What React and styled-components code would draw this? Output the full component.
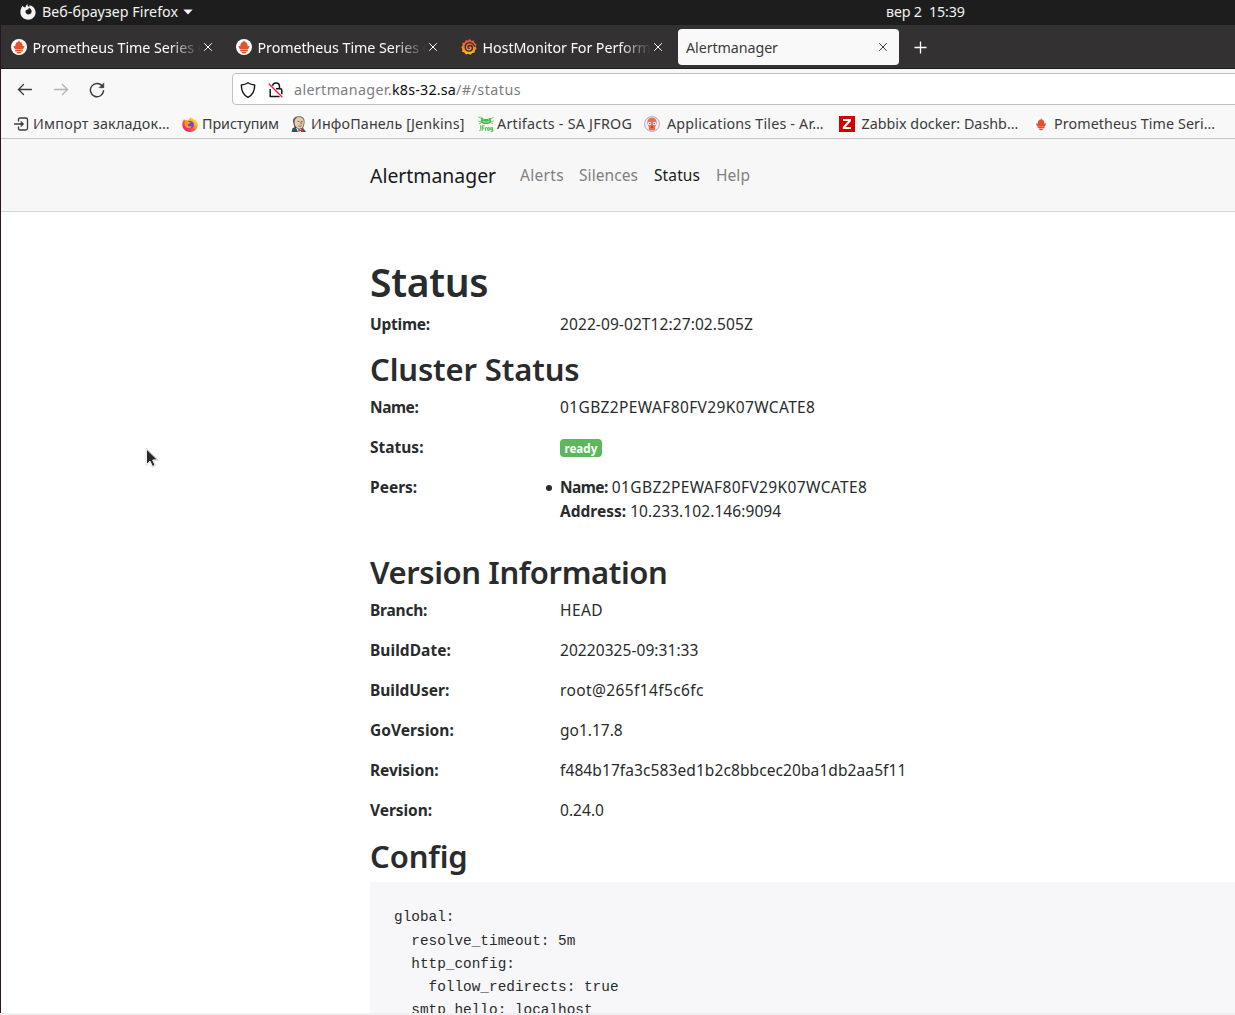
import React from 'react';
import styled, { createGlobalStyle, css } from 'styled-components';

const GlobalStyle = createGlobalStyle`
  * { box-sizing: border-box; }
  html, body { margin: 0; height: 100%; overflow: hidden; }
  #root { height: 100%; }
  body {
    font-family: "Noto Sans", "Open Sans", sans-serif;
    color: #292b2c;
    background: #fff;
  }
`;

const Desktop = styled.div`
  position: relative;
  display: flex;
  flex-direction: column;
  height: 1015px;
  width: 1235px;
  overflow: hidden;
  background: #f0f0f0;
  cursor: default;
`;

/* Letter spacing in thousandths of an em. */
const tracked = css`
  letter-spacing: ${(p) => (p.$track || 0) / 1000}em;
`;

/* ---------- desktop top bar ---------- */

const TopBar = styled.header`
  display: grid;
  grid-template-columns: 886px 1fr;
  align-items: center;
  height: 25px;
  flex: none;
  padding-bottom: 2px;
  background: #1d1d1d;
  color: #f2f2f2;
  font-size: 14.3px;
  line-height: 23px;
  white-space: pre;
`;

const AppMenu = styled.div`
  display: flex;
  align-items: center;
  padding-left: 20px;
  svg { flex: none; }
`;

const AppMenuLabel = styled.span`
  margin: 0 5px 0 6px;
  ${tracked}
`;

const Clock = styled.time`
  ${tracked}
`;

/* ---------- browser window ---------- */

const Window = styled.main`
  display: flex;
  flex-direction: column;
  height: 988px;
  flex: none;
  border-left: 1px solid #2e1226;
  background: #fff;
  overflow: hidden;
`;

const TabStrip = styled.div`
  display: flex;
  align-items: center;
  height: 44px;
  flex: none;
  padding-top: 1px;
  background: #333132;
  border-bottom: 1px solid #1f1d1e;
`;

const Tab = styled.div`
  display: flex;
  align-items: center;
  width: ${(p) => (p.$active ? 221 : 225)}px;
  height: 36px;
  margin-left: ${(p) => (p.$active ? 2 : 0)}px;
  padding: 0 ${(p) => (p.$active ? 11 : 13)}px 0 ${(p) => (p.$active ? 8 : 10)}px;
  border-radius: 4px;
  color: ${(p) => (p.$active ? '#3b3b3b' : '#fbfbfb')};
  background: ${(p) => (p.$active ? '#f9f9f9' : 'transparent')};
  svg { flex: none; }
`;

const TabTitle = styled.span`
  flex: 1;
  min-width: 0;
  height: 36px;
  margin-left: ${(p) => (p.$bare ? 0 : 5.5)}px;
  margin-right: 2px;
  overflow: hidden;
  white-space: nowrap;
  font-size: 14.3px;
  line-height: 37px;
  ${tracked}
  ${(p) => !p.$bare && css`mask-image: linear-gradient(to left, transparent 0, #000 32px);`}
`;

const NewTab = styled.div`
  display: flex;
  margin-left: 15px;
`;

const Toolbar = styled.div`
  display: flex;
  align-items: flex-start;
  height: 41px;
  flex: none;
  padding-top: 4px;
  background: #f8f8f8;
`;

const NavButtons = styled.div`
  display: flex;
  align-items: center;
  gap: 20px;
  width: 231px;
  height: 34px;
  padding-left: 16px;
`;

const UrlField = styled.div`
  display: flex;
  align-items: center;
  flex: 1;
  height: 32px;
  margin-right: -10px;
  padding: 1px 0 0 7px;
  border: 1px solid #c0c0c0;
  border-radius: 4px;
  background: #fff;
`;

const UrlIcons = styled.div`
  display: flex;
  gap: 12px;
  width: 54px;
`;

const UrlPart = styled.span`
  color: ${(p) => (p.$host ? '#0b0b0b' : '#7d7d7d')};
  font-size: 14.3px;
  line-height: 30px;
  ${tracked}
`;

const Bookmarks = styled.div`
  display: flex;
  height: 29px;
  flex: none;
  padding: 0 0 0 12px;
  background: #f8f8f8;
  border-bottom: 1px solid #c4c4c4;
`;

const Bookmark = styled.div`
  display: flex;
  align-items: center;
  flex: none;
  width: ${(p) => p.$w}px;
  gap: ${(p) => p.$gap || 4}px;
  color: #3b3b3b;
  font-size: 14.3px;
  line-height: 28px;
  white-space: nowrap;
  svg { flex: none; }
`;

const BookmarkLabel = styled.span`
  ${tracked}
`;

/* ---------- page ---------- */

const SiteNav = styled.nav`
  display: flex;
  align-items: center;
  height: 73px;
  flex: none;
  padding-left: 369px;
  background: #f7f7f7;
  border-bottom: 1px solid #d5d5d5;
`;

const Brand = styled.a`
  width: 150px;
  padding-top: 2px;
  color: #1a1a1a;
  font-size: 19.4px;
  line-height: 30px;
`;

const NavItem = styled.a`
  width: ${(p) => p.$w}px;
  color: ${(p) => (p.$active ? '#1a1a1a' : '#808080')};
  font-size: 15.5px;
  line-height: 24px;
  ${tracked}
`;

const Content = styled.section`
  flex: 1;
  min-height: 0;
  padding: 48px 0 0 369px;
  overflow: hidden;
`;

const Title = styled.h1`
  margin: 0 0 8px;
  font-size: 39px;
  font-weight: 600;
  line-height: 44px;
  ${tracked}
`;

const Heading = styled.h2`
  margin: 0 0 7.8px;
  padding-top: 0.2px;
  font-size: 31px;
  font-weight: 600;
  line-height: 35.2px;
  ${tracked}
`;

const Row = styled.div`
  display: grid;
  grid-template-columns: 190px 1fr;
  margin-bottom: ${(p) => (p.$last ? 32 : 16)}px;
  font-size: 15.5px;
  line-height: 24px;
`;

const Label = styled.b`
  font-weight: 700;
  ${tracked}
`;

const Value = styled.span`
  ${tracked}
`;

const Badge = styled.span`
  display: inline-block;
  height: 18px;
  margin-top: 4px;
  padding: 0 4.5px;
  border-radius: 4px;
  background: #5cb85c;
  color: #fff;
  font-size: 11.6px;
  font-weight: 700;
  line-height: 19px;
  vertical-align: top;
`;

const Peers = styled.ul`
  margin: 0;
  padding: 0;
  list-style: none;
`;

const Peer = styled.li`
  position: relative;
  &::before {
    content: "";
    position: absolute;
    left: -14px;
    top: 10px;
    width: 6px;
    height: 6px;
    border-radius: 50%;
    background: #292b2c;
  }
`;

const Config = styled.pre`
  margin: 0;
  padding: 24.85px 24px 0;
  height: 300px;
  background: #f7f7f9;
  color: #292b2c;
  font: 14.4px/23.1px "Liberation Mono", monospace;
`;

const Pointer = styled.svg`
  position: absolute;
  left: 145px;
  top: 447px;
`;

/* ---------- icons ---------- */

const FirefoxMono = () => (
  <svg width="16" height="16" viewBox="0 0 16 16">
    <path fill="#f2f2f2" fillRule="evenodd" d="M2.4 1.7 4 3.2l1.5.1.7-2.1 1.6-1-.1 1.9 2 1.1L8.300 4.800l.2.700c-1.500 0-2.700.500-3 1.500-.2 2.200 1.200 3.500 3.100 3.500 2.200 0 3.400-1.800 2.900-3.900-.3-1.200-1.200-2.300-2.300-2.700L9.500 1.200C13 1.900 15.600 4.700 15.600 8.500c0 4-3.200 7.200-7.500 7.200S.4 12.500.4 8.300C.4 5.300 1.300 4 2.400 1.700Z" />
  </svg>
);

const Caret = () => (
  <svg width="10" height="6" viewBox="0 0 10 6"><path d="M.3.500h9.400L5 5.500Z" fill="#f2f2f2" /></svg>
);

const Prometheus = ({ inset }) => (
  <svg width="16" height="16" viewBox="0 0 16 16">
    <circle cx="8" cy="8" r="8" fill="#fff" />
    <g fill="#e6522c" transform={inset ? 'translate(.9 1.200) scale(.9)' : undefined}>
      <path d="M8 1c.2 1 1 1.700 1.300 2.600.3-.3.400-.8.400-1.200 1.300 1.600 2.200 3.100 2 4.900l1.800-.6c-.1 1.500-.8 2.900-1.800 3.800H4.300c-1-.9-1.700-2.300-1.800-3.800l1.800.6c-.2-1.800.7-3.300 2-4.900 0 .4.100.9.400 1.200C7 2.700 7.800 2 8 1Z" />
      <path d="M4.200 11h7.600v1.400H4.200zM5.500 12.900h5c-.4 1.100-1.300 1.700-2.500 1.700s-2.100-.6-2.500-1.700Z" />
    </g>
  </svg>
);

const Grafana = () => (
  <svg width="16" height="16" viewBox="0 0 16 16">
    <defs>
      <linearGradient id="grafana" x1="0" y1="1" x2="0" y2="0">
        <stop offset="0" stopColor="#fcc81b" /><stop offset=".55" stopColor="#f4792b" /><stop offset="1" stopColor="#ee4f29" />
      </linearGradient>
    </defs>
    <path fill="url(#grafana)" d="m8.600.1 1.700 1.700 2.700-.4.200 2.300 2.200 1.500-.8 2.200 1.100 2.100-1.800 1.700-.2 2.400-2.500.3-1.700 1.900-2.200-1-2.400.7-1.400-2-2.400-.8.300-2.400L.2 8.500l1.400-1.900-.2-2.500 2.300-.7.900-2.200 2.400.4Z" />
    <path fill="none" stroke="#333132" strokeWidth="1.400" strokeLinecap="round" d="M13.600 7.300C12.500 4.600 10.700 3.700 8.700 3.600 5.700 3.400 4 5.800 4.200 8.200c.2 2.500 2 3.900 4.100 3.900 1.800 0 3.100-1.300 3.100-3 0-1.500-1-2.600-2.400-2.600-1.200 0-2 .8-2 1.700 0 .700.5 1.200 1.200 1.200" />
  </svg>
);

const Close = () => (
  <svg width="10" height="10" viewBox="0 0 10 10"><path d="m1.200 1.200 7.600 7.600M8.800 1.200 1.200 8.800" stroke="currentColor" strokeWidth="1" /></svg>
);

const Plus = () => (
  <svg width="14" height="14" viewBox="0 0 14 14"><path d="M.5 7.500h12M6.500 1.500v12" stroke="#fff" strokeWidth="1.300" /></svg>
);

const Back = () => (
  <svg width="16" height="16" viewBox="0 0 16 16" fill="none" stroke="#3b3b3b" strokeWidth="1.300" strokeLinecap="round" strokeLinejoin="round">
    <path d="M14.500 7.500H1.300M6.500 2.500l-5 5 5 5" />
  </svg>
);

const Forward = () => (
  <svg width="16" height="16" viewBox="0 0 16 16" fill="none" stroke="#b4b4b4" strokeWidth="1.300" strokeLinecap="round" strokeLinejoin="round">
    <path d="M1.500 7.500h13.200M9.500 2.500l5 5-5 5" />
  </svg>
);

const Reload = () => (
  <svg width="16" height="16" viewBox="0 0 16 16" fill="none" stroke="#3b3b3b" strokeWidth="1.400" strokeLinecap="round">
    <path d="M13.600 4.600A6.600 6.600 0 1 0 14.600 8.600" />
    <path d="M14.800 1.200v4.500h-4.500Z" fill="#3b3b3b" strokeWidth=".6" strokeLinejoin="round" />
  </svg>
);

const Shield = () => (
  <svg width="16" height="16" viewBox="0 0 16 16" fill="none" stroke="#151515" strokeWidth="1.400" strokeLinejoin="round">
    <path d="M8 .8c1.800 1.300 4 2 6.700 2.200C14.700 8.500 13 13 8 15.300 3 13 1.300 8.500 1.300 3 4 2.800 6.200 2.100 8 .8Z" />
  </svg>
);

const InsecureLock = () => (
  <svg width="16" height="16" viewBox="0 0 16 16" fill="none" stroke="#151515" strokeWidth="1.500">
    <path d="M4.500 4.300C4.700 2.200 6 .9 8 .9s3.500 1.500 3.500 3.600V7M8 6.700h4.300q1.500 0 1.500 1.500v4M2.200 7v7.500h9.600" strokeLinejoin="round" />
    <path d="m.8 1.800 13.500 13.500" stroke="#fff" strokeWidth="2.600" />
    <path d="m.8 1.800 13.500 13.500" stroke="#e22850" strokeWidth="1.400" />
  </svg>
);

const Import = () => (
  <svg width="16" height="16" viewBox="0 0 16 16" fill="none" stroke="#3b3b3b" strokeWidth="1.300" strokeLinecap="round" strokeLinejoin="round">
    <path d="M5.500 5V3.500q0-1.500 1.500-1.500h6q1.500 0 1.500 1.500v9q0 1.500-1.500 1.500H7q-1.500 0-1.500-1.500V11M1.500 8h8" />
    <path d="m8.200 5.500 2.600 2.500-2.600 2.500Z" fill="#3b3b3b" strokeWidth=".6" />
  </svg>
);

const Firefox = () => (
  <svg width="16" height="16" viewBox="0 0 16 16">
    <defs>
      <linearGradient id="flame" x1=".9" y1=".1" x2=".2" y2=".9">
        <stop offset="0" stopColor="#fff44f" /><stop offset=".35" stopColor="#ffb028" /><stop offset=".65" stopColor="#ff5b38" /><stop offset="1" stopColor="#f5156c" />
      </linearGradient>
    </defs>
    <path fill="url(#flame)" d="M8.800.2c.3 1.500 1.400 2.100 2.700 3 .7.500 1 1 1.200 1.500.3-.4.200-1-.1-1.700 2.100 1.400 3.200 3.400 3.200 5.700 0 4.200-3.500 7.200-7.700 7.200S.3 12.700.3 8.400c0-2.300.9-4.200 2-5.400 0 .7.200 1.200.6 1.600 1-.4 2-.3 2.700 0C6.400 4 8.600 2.500 8.800.2Z" />
    <circle cx="8" cy="8.800" r="3.800" fill="#7542e5" />
    <path fill="#ff9a2b" d="M2.900 5.600c1.500-.8 3-.4 3.800.5l2 .2c-.4.900-1.300 1-2.100 1.500-.7.400-.9 1.300-.3 2 .9.900 2.500.6 3.600.2-.8 1.800-2.600 2.600-4.400 2.100C3 11.400 2 8.300 2.900 5.600Z" />
  </svg>
);

const Jenkins = () => (
  <svg width="16" height="16" viewBox="0 0 16 16">
    <path fill="#6b5a4e" d="M2.300 7C1 3 3.500.3 7.500.2 12 0 14 2.800 13.500 6.500c-.2 2.500-.8 5-2.500 6.500L4 14Z" />
    <path fill="#335061" d="M.6 16 1.500 12.300 5 10.500l7.500 2L15 16Z" />
    <path fill="#e3cbb0" d="M3.600 5.300C4.200 2.200 6 1 8.200 1c3.300.1 4.700 2.300 4.600 4.900-.1 3.600-1.500 6.600-3.800 6.800C6.300 12.800 4.300 10.500 3.600 7.800Z" />
    <path fill="#fff" d="m5 11.500 3.500 2.200 1.800-.8L10 16H7Z" />
    <path fill="#d33833" d="m7.300 12.700 2.200 1.200 3-1.200v3l-3-.7-2.200 1Z" />
    <path fill="none" stroke="#48403a" strokeWidth=".8" d="M6.700 5.400h1.600M10 5.400h1.500M7.500 9.800c1 .5 2 .4 3 0M9.700 6l.7 1.700h-.9" />
  </svg>
);

const JFrog = () => (
  <svg width="16" height="16" viewBox="0 0 16 16">
    <path fill="none" stroke="#40be46" strokeWidth=".8" d="M.3.800 4 3M15.700 1.200 12 3.200M.3 5l3 1M15.700 5l-3 1M1 8l3-1.700M15 8l-3-1.700M3 .5l1.500 2" />
    <path fill="#40be46" d="M3.200 3c1-1.300 2-1.100 2.700-.1h4.200c.7-1.200 2-1.200 2.700 0 .7 1.200.3 3.300-.8 4-2 1.600-6 1.600-8 0C2.700 6.200 2.500 4.200 3.200 3Z" />
    <path stroke="#fff" strokeWidth=".6" fill="none" d="M4.500 5.300c2 1 5 1 7 0M5 3.700h.8M10.200 3.700h.8" />
    <path fill="none" stroke="#40be46" strokeWidth="1" d="M2.700 9.300v4.200q0 1.200-1.400 1.200M4.300 14.700V9.800h2.300M4.300 12h2M7.500 14.700v-3H9M9.700 11.700h1.600v2.500H9.700ZM14.500 11.700h-1.800v2h2V15.300h-2M14.600 11.500V15" />
  </svg>
);

const Argo = () => (
  <svg width="16" height="16" viewBox="0 0 16 16">
    <circle cx="8" cy="8" r="7.400" fill="#f3f4fb" stroke="#a59bcd" strokeWidth=".9" />
    <path fill="#ee6b45" d="M8 1.800c3 0 4.700 2 4.700 4.700 0 1.800-.6 3-1.600 3.900v3.300l-1.500.9-.8-.7-.8.900-.8-.9-.8.700-1.500-.9v-3.300c-1-.9-1.600-2.100-1.600-3.900 0-2.700 1.700-4.700 4.700-4.700Z" />
    <circle cx="5.600" cy="7.500" r="1.700" fill="#fff" /><circle cx="10.400" cy="7.500" r="1.700" fill="#fff" />
    <circle cx="5.800" cy="7.600" r=".7" fill="#3b2a2c" /><circle cx="10.200" cy="7.600" r=".7" fill="#3b2a2c" />
    <path d="M7 10.800q1 1 2 0" fill="none" stroke="#5a1a10" strokeWidth=".8" />
  </svg>
);

const Zabbix = () => (
  <svg width="16" height="16" viewBox="0 0 16 16">
    <path fill="#d40000" d="M0 0h16v16H0z" />
    <path fill="#fff" d="M4 3h8v1.900L6.700 11H12v2H3.800v-1.900L9.100 5H4Z" />
  </svg>
);

const TABS = [
  { title: 'Prometheus Time Series C', icon: Prometheus },
  { title: 'Prometheus Time Series C', icon: Prometheus },
  { title: 'HostMonitor For Perform', icon: Grafana },
];

const BOOKMARKS = [
  { label: 'Импорт закладок…', icon: Import, w: 169, track: 18 },
  { label: 'Приступим', icon: Firefox, w: 109, track: -4 },
  { label: 'ИнфоПанель [Jenkins]', icon: Jenkins, w: 187, track: 10 },
  { label: 'Artifacts - SA JFROG', icon: JFrog, w: 166, track: 17, gap: 3 },
  { label: 'Applications Tiles - Ar…', icon: Argo, w: 195, track: 13, gap: 7 },
  { label: 'Zabbix docker: Dashb…', icon: Zabbix, w: 194, track: 1, gap: 6.5 },
  { label: 'Prometheus Time Seri…', icon: Prometheus, w: 185, track: 6, gap: 5, inset: true },
];

const LINKS = [
  { label: 'Alerts', w: 59, track: 21 },
  { label: 'Silences', w: 75, track: 5 },
  { label: 'Status', w: 62, track: 7, active: true },
  { label: 'Help', w: 50, track: 4 },
];

const VERSION = [
  ['Branch:', -14, 'HEAD', 27],
  ['BuildDate:', 3, '20220325-09:31:33', 4],
  ['BuildUser:', -1, 'root@265f14f5c6fc', 25],
  ['GoVersion:', 3, 'go1.17.8', 0],
  ['Revision:', -4, 'f484b17fa3c583ed1b2c8bbcec20ba1db2aa5f11', 6],
  ['Version:', -4, '0.24.0', 2],
];

const CONFIG = `global:
  resolve_timeout: 5m
  http_config:
    follow_redirects: true
  smtp_hello: localhost`;

export default function App() {
  return (
    <Desktop>
      <GlobalStyle />
      <TopBar>
        <AppMenu>
          <FirefoxMono />
          <AppMenuLabel $track={2}>Веб-браузер Firefox</AppMenuLabel>
          <Caret />
        </AppMenu>
        <Clock $track={-10}>{'вер 2  15:39'}</Clock>
      </TopBar>
      <Window>
        <TabStrip>
          {TABS.map(({ title, icon: Icon }, i) => (
            <Tab key={i}>
              <Icon />
              <TabTitle $track={-5}>{title}</TabTitle>
              <Close />
            </Tab>
          ))}
          <Tab $active>
            <TabTitle $bare $track={-6}>Alertmanager</TabTitle>
            <Close />
          </Tab>
          <NewTab><Plus /></NewTab>
        </TabStrip>
        <Toolbar>
          <NavButtons><Back /><Forward /><Reload /></NavButtons>
          <UrlField>
            <UrlIcons><Shield /><InsecureLock /></UrlIcons>
            <UrlPart $track={25}>alertmanager.</UrlPart>
            <UrlPart $host $track={13}>k8s-32.sa</UrlPart>
            <UrlPart $track={33}>/#/status</UrlPart>
          </UrlField>
        </Toolbar>
        <Bookmarks>
          {BOOKMARKS.map(({ label, icon: Icon, w, gap, track, inset }) => (
            <Bookmark key={label} $w={w} $gap={gap}>
              <Icon inset={inset} />
              <BookmarkLabel $track={track}>{label}</BookmarkLabel>
            </Bookmark>
          ))}
        </Bookmarks>
        <SiteNav>
          <Brand>Alertmanager</Brand>
          {LINKS.map(({ label, w, track, active }) => (
            <NavItem key={label} $w={w} $track={track} $active={active}>{label}</NavItem>
          ))}
        </SiteNav>
        <Content>
          <Title $track={-8}>Status</Title>
          <Row>
            <Label $track={-15}>Uptime:</Label>
            <Value $track={6}>2022-09-02T12:27:02.505Z</Value>
          </Row>
          <Heading $track={-4}>Cluster Status</Heading>
          <Row>
            <Label $track={-30}>Name:</Label>
            <Value $track={24}>01GBZ2PEWAF80FV29K07WCATE8</Value>
          </Row>
          <Row>
            <Label>Status:</Label>
            <div><Badge>ready</Badge></div>
          </Row>
          <Row $last>
            <Label>Peers:</Label>
            <Peers>
              <Peer>
                <div><Label $track={-36}>Name:</Label> <Value $track={24}>01GBZ2PEWAF80FV29K07WCATE8</Value></div>
                <div><Label>Address:</Label> <Value $track={5}>10.233.102.146:9094</Value></div>
              </Peer>
            </Peers>
          </Row>
          <Heading $track={-13}>Version Information</Heading>
          {VERSION.map(([label, labelTrack, value, track]) => (
            <Row key={label}>
              <Label $track={labelTrack}>{label}</Label>
              <Value $track={track}>{value}</Value>
            </Row>
          ))}
          <Heading $track={-4}>Config</Heading>
          <Config>{CONFIG}</Config>
        </Content>
      </Window>
      <Pointer width="14" height="22" viewBox="0 0 14 22">
        <path d="M1.500 2v15.500l3.500-3.300 2.500 5.300 2.600-1.200-2.400-5.200 4.800-.3Z" fill="#292929" stroke="#fff" strokeWidth="1" />
        <path d="M1 1v17.500l3.700-3.300 2.500 5 3.600-1.600-2.400-5 4.900-.3Z" fill="none" stroke="#00000030" strokeWidth=".6" />
      </Pointer>
    </Desktop>
  );
}
